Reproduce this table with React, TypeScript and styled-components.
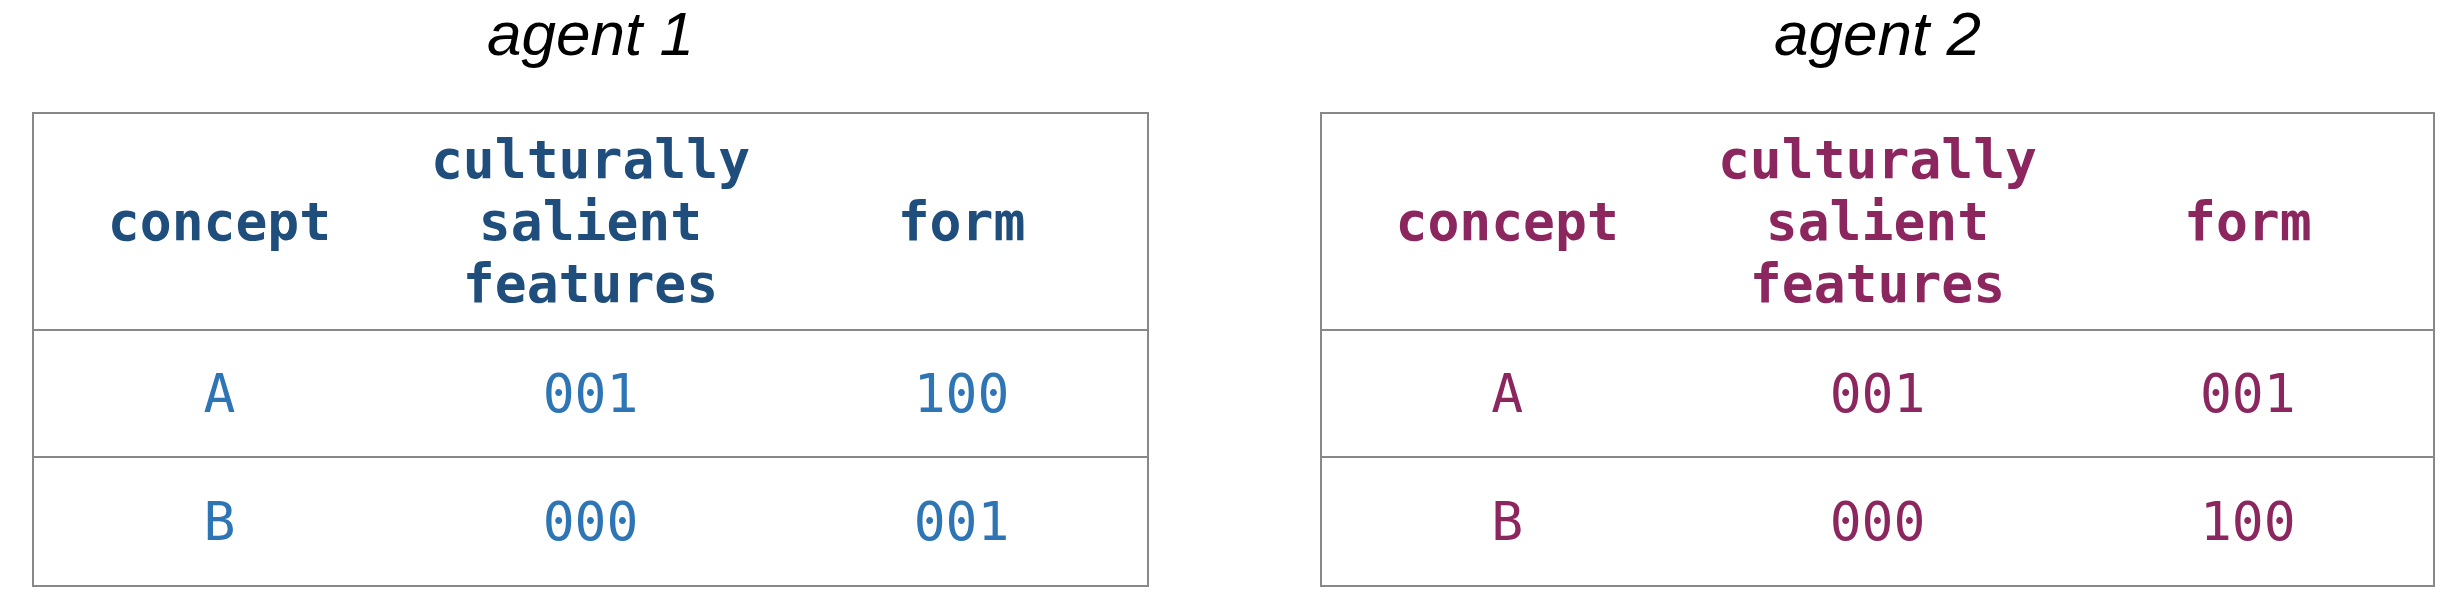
import React from 'react';
import styled, { createGlobalStyle } from 'styled-components';

const GlobalStyle = createGlobalStyle`
  html, body {
    margin: 0;
    padding: 0;
    background: #ffffff;
  }
`;

const Page = styled.div`
  display: flex;
  align-items: flex-start;
  gap: 171px;
  padding-left: 32px;
  width: 2459px;
  height: 611px;
  box-sizing: border-box;
`;

const Panel = styled.section<{ $width: number }>`
  width: ${(p) => p.$width}px;
  display: flex;
  flex-direction: column;
  align-items: stretch;
`;

const AgentTitle = styled.h2`
  margin: 0 0 47px;
  padding-top: 3px;
  height: 62px;
  line-height: 62px;
  font-family: 'Liberation Sans', Arial, sans-serif;
  font-style: italic;
  font-weight: 400;
  font-size: 62px;
  color: #000000;
  text-align: center;
`;

const Table = styled.div`
  border: 2px solid #888888;
  display: flex;
  flex-direction: column;
`;

const Row = styled.div<{ $height: number; $last?: boolean }>`
  display: grid;
  grid-template-columns: 1fr 1fr 1fr;
  align-items: center;
  height: ${(p) => p.$height}px;
  border-bottom: ${(p) => (p.$last ? 'none' : '2px solid #888888')};
`;

const HeadCell = styled.div<{ $color: string }>`
  font-family: 'DejaVu Sans Mono', 'Liberation Mono', monospace;
  font-weight: 700;
  font-size: 53px;
  line-height: 62px;
  color: ${(p) => p.$color};
  text-align: center;
`;

const Cell = styled.div<{ $color: string }>`
  font-family: 'DejaVu Sans Mono', 'Liberation Mono', monospace;
  font-weight: 400;
  font-size: 53px;
  line-height: 62px;
  color: ${(p) => p.$color};
  text-align: center;
`;

type AgentProps = {
  title: string;
  width: number;
  headColor: string;
  bodyColor: string;
  rows: [string, string, string][];
};

function AgentTable({ title, width, headColor, bodyColor, rows }: AgentProps) {
  return (
    <Panel $width={width}>
      <AgentTitle>{title}</AgentTitle>
      <Table>
        <Row $height={215}>
          <HeadCell $color={headColor}>concept</HeadCell>
          <HeadCell $color={headColor}>
            culturally
            <br />
            salient
            <br />
            features
          </HeadCell>
          <HeadCell $color={headColor}>form</HeadCell>
        </Row>
        {rows.map((r, i) => (
          <Row key={r[0]} $height={i === 0 ? 125 : 127} $last={i === rows.length - 1}>
            <Cell $color={bodyColor}>{r[0]}</Cell>
            <Cell $color={bodyColor}>{r[1]}</Cell>
            <Cell $color={bodyColor}>{r[2]}</Cell>
          </Row>
        ))}
      </Table>
    </Panel>
  );
}

export default function App() {
  return (
    <>
      <GlobalStyle />
      <Page>
        <AgentTable
          title="agent 1"
          width={1117}
          headColor="#1f4e7d"
          bodyColor="#2e75b6"
          rows={[
            ['A', '001', '100'],
            ['B', '000', '001'],
          ]}
        />
        <AgentTable
          title="agent 2"
          width={1115}
          headColor="#8c265f"
          bodyColor="#8c265f"
          rows={[
            ['A', '001', '001'],
            ['B', '000', '100'],
          ]}
        />
      </Page>
    </>
  );
}
